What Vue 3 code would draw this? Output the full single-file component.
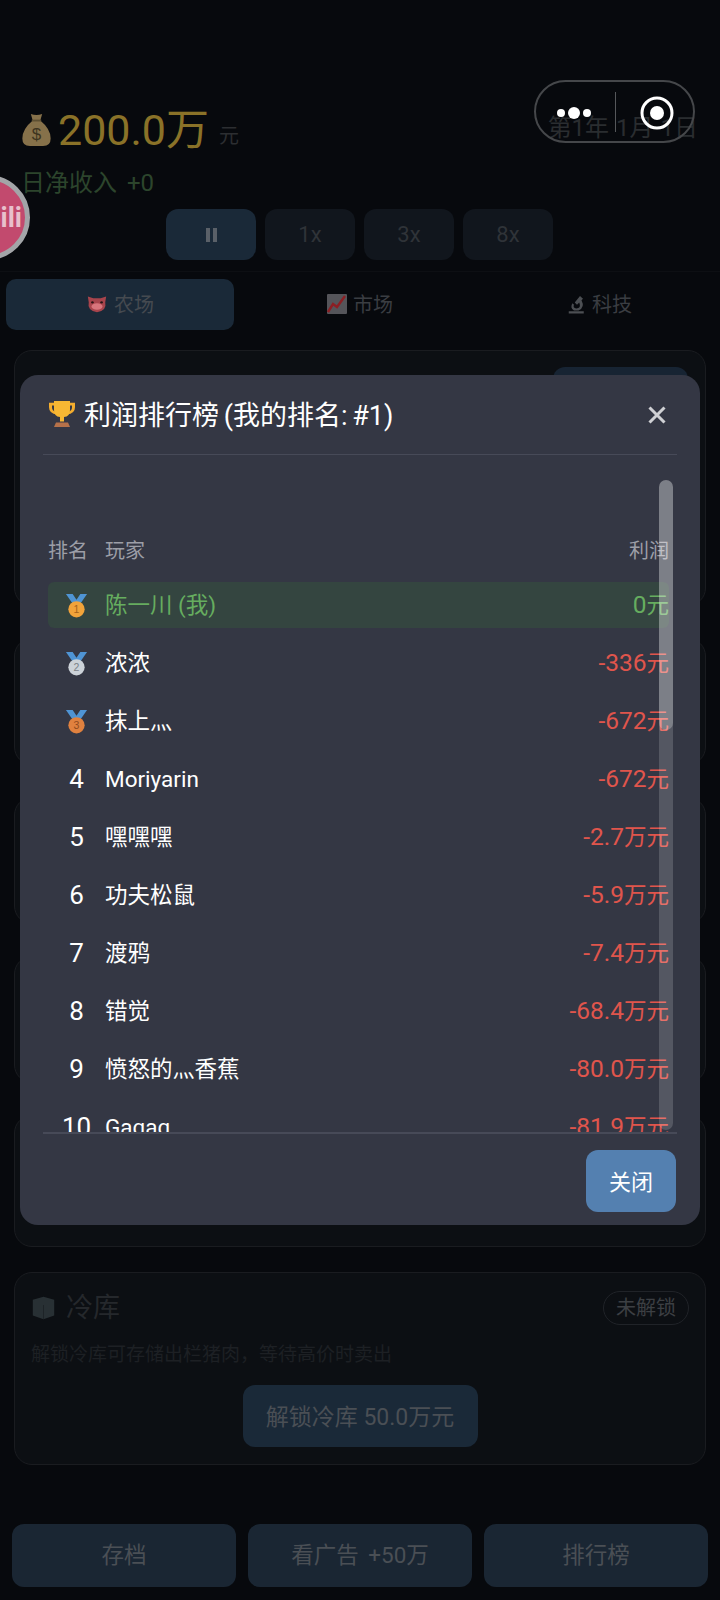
<template>
  <div class="page">
    <div class="capsule">
      <svg class="cap-more" width="40" height="20" viewBox="0 0 40 20">
        <circle cx="5" cy="10" r="4" fill="#fff" />
        <circle cx="18" cy="10" r="6" fill="#fff" />
        <circle cx="31" cy="10" r="4" fill="#fff" />
      </svg>
      <span class="cap-line"></span>
      <svg class="cap-ring" width="36" height="36" viewBox="0 0 36 36">
        <circle cx="18" cy="18" r="15" fill="none" stroke="#fff" stroke-width="3" />
        <circle cx="18" cy="18" r="7" fill="#fff" />
      </svg>
    </div>

    <div class="avatar"><span>bili</span></div>

    <header class="stats">
      <div class="stats-top">
        <div class="money">
          <svg width="31" height="34" viewBox="0 0 32 36">
            <path d="M10 1 Q16 3 22 1 L20 8 Q31 17 31 27 Q31 35 23 35 L9 35 Q1 35 1 27 Q1 17 12 8 Z" fill="#86714a" />
            <rect x="11" y="7" width="10" height="2" fill="#5e5032" />
            <text x="16" y="29" font-size="18" text-anchor="middle" fill="#3d3420" font-family="Liberation Sans">$</text>
          </svg>
          <span class="money-num">200.0万</span>
          <span class="money-unit">元</span>
        </div>
        <div class="date">第1年 1月 1日</div>
      </div>
      <div class="income"><span>日净收入</span><span>+0</span></div>
      <div class="speeds">
        <button class="speed on"><i></i><i></i></button>
        <button class="speed">1x</button>
        <button class="speed">3x</button>
        <button class="speed">8x</button>
      </div>
    </header>

    <nav class="tabs">
      <div class="tab on">
        <svg width="22" height="20" viewBox="0 0 24 24" preserveAspectRatio="none">
          <path d="M2 3 L8 5 H16 L22 3 L21 10 Q23 20 12 22 Q1 20 3 10 Z" fill="#a8444c" />
          <ellipse cx="12" cy="15" rx="6" ry="4" fill="#d8757c" />
          <circle cx="7" cy="10" r="1.4" fill="#2a1416" />
          <circle cx="17" cy="10" r="1.4" fill="#2a1416" />
        </svg>
        农场
      </div>
      <div class="tab">
        <svg width="20" height="20" viewBox="0 0 20 20">
          <rect width="20" height="20" rx="1" fill="#55555a" />
          <path d="M1 18 L6 10 L10 13 L18 2" fill="none" stroke="#8c1f24" stroke-width="2.4" />
        </svg>
        市场
      </div>
      <div class="tab">
        <svg width="18" height="22" viewBox="0 0 24 30" preserveAspectRatio="none">
          <path d="M1 28 H21 V25 H1 Z M8 24 Q2 20 6 14 L8 16 Q6 20 11 21 Q18 21 15 13 L12 16 L9 13 L16 4 L20 8 L18 10 Q23 20 14 24 Z" fill="#4c4f53" />
        </svg>
        科技
      </div>
    </nav>

    <main class="cards">
      <section class="card h1">
        <div class="card-btn"></div>
      </section>
      <section class="card h2"></section>
      <section class="card h2"></section>
      <section class="card h2"></section>
      <section class="card h3"></section>
      <section class="card cold">
        <div class="cold-head">
          <div class="cold-title">
            <svg width="25" height="24" viewBox="0 0 28 32" preserveAspectRatio="none">
              <path d="M2 5 L14 1 L26 5 V26 L14 31 L2 26 Z" fill="#283034" />
              <path d="M14 12 V31" stroke="#1b2124" stroke-width="1" />
            </svg>
            冷库
          </div>
          <span class="badge">未解锁</span>
        </div>
        <p class="cold-desc">解锁冷库可存储出栏猪肉，等待高价时卖出</p>
        <button class="cold-btn">解锁冷库 50.0万元</button>
      </section>
    </main>

    <footer class="actions">
      <button>存档</button>
      <button>看广告 +50万</button>
      <button>排行榜</button>
    </footer>

    <div class="modal">
      <div class="modal-head">
        <svg class="trophy" width="28" height="27" viewBox="0 0 28 30" preserveAspectRatio="none">
          <path d="M1 3 H27 V8 Q27 15 19 16 L9 16 Q1 15 1 8 Z M4 6 V8 Q4 12 8 13 L20 13 Q24 12 24 8 V6 Z" fill="#f4ad2e" />
          <path d="M6 1 H22 V11 Q22 18 16 19 V24 H12 V19 Q6 18 6 11 Z" fill="#f7b733" />
          <path d="M8 25 H20 L22 30 H6 Z" fill="#b5714a" />
        </svg>
        <span class="modal-title">利润排行榜 (我的排名: #1)</span>
        <svg class="close" width="20" height="20" viewBox="0 0 20 20">
          <path d="M2.5 2.5 L17.5 17.5 M17.5 2.5 L2.5 17.5" stroke="#cfd0d4" stroke-width="3" />
        </svg>
      </div>
      <div class="modal-body">
        <div class="thead">
          <span class="c-rank">排名</span>
          <span class="c-name">玩家</span>
          <span class="c-val">利润</span>
        </div>
        <div v-for="(r, i) in rows" :key="i" :class="['row', { me: i === 0 }]">
          <span class="c-rank rank">
            <svg v-if="i < 3" width="23" height="25" viewBox="0 0 24 26">
              <path d="M1 1 H8 L12 7 L16 1 H23 L14 14 H10 Z" fill="#4f94d4" />
              <circle cx="12" cy="17" r="8.5" :fill="medals[i]" />
              <text x="12" y="21" font-size="11" text-anchor="middle" :fill="medalText[i]" font-family="Liberation Sans">{{ i + 1 }}</text>
            </svg>
            <template v-else>{{ i + 1 }}</template>
          </span>
          <span class="c-name">{{ r.name }}<span v-if="r.tail" class="tail">灬</span>{{ r.rest }}</span>
          <span :class="['c-val', { neg: i > 0 }]"><span class="num">{{ r.num }}</span>{{ r.unit }}</span>
        </div>
        <div class="bar"><div class="bar-thumb"></div></div>
      </div>
      <div class="modal-foot">
        <button class="close-btn">关闭</button>
      </div>
    </div>
  </div>
</template>

<script setup>
const medals = ['#f2a33a', '#ccd2d8', '#e0813f']
const medalText = ['#a8641a', '#7b8288', '#8f4a1e']

const rows = [
  { name: '陈一川 (我)', num: '0', unit: '元' },
  { name: '浓浓', num: '-336', unit: '元' },
  { name: '抹上', tail: true, num: '-672', unit: '元' },
  { name: 'Moriyarin', num: '-672', unit: '元' },
  { name: '嘿嘿嘿', num: '-2.7', unit: '万元' },
  { name: '功夫松鼠', num: '-5.9', unit: '万元' },
  { name: '渡鸦', num: '-7.4', unit: '万元' },
  { name: '错觉', num: '-68.4', unit: '万元' },
  { name: '愤怒的', tail: true, rest: '香蕉', num: '-80.0', unit: '万元' },
  { name: 'Gagag', num: '-81.9', unit: '万元' }
]
</script>

<style>
html, body {
  margin: 0;
  background: #07090d;
}
</style>

<style scoped>
.page {
  position: relative;
  width: 720px;
  height: 1600px;
  overflow: hidden;
  background: #07090d;
  font-family: Roboto, "Noto Sans CJK SC", sans-serif;
}

button {
  border: 0;
  font-family: inherit;
  padding: 0;
}

.capsule {
  position: absolute;
  z-index: 3;
  top: 80px;
  left: 534px;
  width: 161px;
  height: 63px;
  box-sizing: border-box;
  border: 2px solid #45474a;
  border-radius: 32px;
  display: flex;
  align-items: center;
  padding-left: 20px;
}

.cap-more {
  margin-top: 2px;
}

.cap-line {
  width: 1px;
  height: 40px;
  margin-left: 19px;
  background: #55575a;
}

.cap-ring {
  margin-left: 23px;
  margin-top: 2px;
}

.avatar {
  position: absolute;
  top: 175px;
  left: -55px;
  width: 85px;
  height: 85px;
  box-sizing: border-box;
  border: 5px solid #a3a5a8;
  border-radius: 50%;
  background: #c24a6e;
  color: #e8c0cc;
  font-size: 27px;
  font-weight: 700;
  display: flex;
  align-items: center;
  justify-content: flex-end;
  padding-right: 3px;
  overflow: hidden;
}

.stats {
  padding: 102px 22px 0 21px;
}

.stats-top {
  display: flex;
  justify-content: space-between;
  align-items: center;
}

.money {
  display: flex;
  align-items: center;
}

.money svg {
  margin-right: 6px;
}

.money-num {
  font-size: 43px;
  line-height: 56px;
  color: #8a7228;
}

.money-unit {
  font-size: 20px;
  margin: 8px 0 0 10px;
  color: #2c2e31;
}

.date {
  position: relative;
  top: -2px;
  font-size: 24px;
  line-height: 34px;
  color: #2a2d30;
  word-spacing: 1px;
}

.income {
  display: flex;
  gap: 10px;
  font-size: 24px;
  line-height: 34px;
  margin-top: 8px;
  color: #2c452c;
}

.speeds {
  display: flex;
  justify-content: center;
  gap: 9px;
  margin-top: 9px;
}

.speed {
  width: 90px;
  height: 51px;
  border-radius: 12px;
  background: #11161d;
  color: #2f3338;
  font-size: 22px;
  display: flex;
  align-items: center;
  justify-content: center;
  gap: 3px;
}

.speed.on {
  background: #1a2938;
}

.speed i {
  width: 4px;
  height: 14px;
  background: #5a6068;
}

.tabs {
  display: flex;
  gap: 12px;
  margin-top: 11px;
  padding: 7px 6px 0;
  border-top: 1px solid #0d0f13;
}

.tab {
  flex: 1;
  height: 51px;
  box-sizing: border-box;
  padding-bottom: 2px;
  border-radius: 10px;
  color: #3a3d42;
  font-size: 20px;
  display: flex;
  align-items: center;
  justify-content: center;
  gap: 6px;
}

.tab.on {
  background: #1a2938;
  color: #454a50;
}

.cards {
  display: flex;
  flex-direction: column;
  gap: 32px;
  padding: 20px 14px 0;
}

.card {
  position: relative;
  box-sizing: border-box;
  border: 1px solid #1a1c20;
  border-radius: 18px;
  background: #0c0f13;
}

.h1 { height: 256px; }
.h2 { height: 127px; }
.h3 { height: 132px; }

.card-btn {
  position: absolute;
  top: 16px;
  right: 17px;
  width: 135px;
  height: 40px;
  border-radius: 12px;
  background: #172433;
}

.cold {
  height: 193px;
  margin-top: -7px;
  padding: 0 16px;
}

.cold-head {
  display: flex;
  align-items: center;
  justify-content: space-between;
  padding-top: 18px;
}

.cold-title {
  display: flex;
  align-items: center;
  gap: 10px;
  font-size: 27px;
  line-height: 34px;
  color: #25282c;
}

.badge {
  box-sizing: border-box;
  border: 1px solid #202328;
  border-radius: 17px;
  height: 34px;
  line-height: 32px;
  padding: 0 12px;
  font-size: 20px;
  color: #3c3f43;
}

.cold-desc {
  margin: 16px 0 0;
  font-size: 19px;
  line-height: 28px;
  color: #1d2024;
}

.cold-btn {
  display: block;
  margin: 16px auto 0;
  width: 235px;
  height: 62px;
  padding-bottom: 3px;
  border-radius: 12px;
  background: #1a2938;
  color: #4a4f55;
  font-size: 23px;
}

.actions {
  position: absolute;
  left: 12px;
  right: 12px;
  bottom: 13px;
  display: flex;
  gap: 12px;
}

.actions button {
  flex: 1;
  height: 63px;
  padding-bottom: 5px;
  border-radius: 12px;
  background: #1a2633;
  color: #4a4f55;
  font-size: 22.5px;
  word-spacing: 4px;
}

.modal {
  position: absolute;
  z-index: 2;
  top: 375px;
  left: 20px;
  width: 680px;
  height: 850px;
  border-radius: 18px;
  background: #343744;
  display: flex;
  flex-direction: column;
}

.modal-head {
  display: flex;
  align-items: center;
  height: 80px;
  margin: 0 23px;
  padding: 0 10px 3px 5px;
  box-sizing: border-box;
  border-bottom: 1px solid #474a58;
}

.trophy {
  margin-right: 8px;
}

.modal-title {
  flex: 1;
  font-size: 27px;
  word-spacing: -2px;
  color: #fff;
}

.close {
  margin-top: 3px;
}

.modal-body {
  position: relative;
  height: 679px;
  margin: 0 23px;
  padding: 78px 0 0 5px;
  box-sizing: border-box;
  overflow: hidden;
  border-bottom: 2px solid #474a58;
  color: #fff;
}

.thead {
  display: flex;
  align-items: center;
  height: 32px;
  margin-right: 8px;
  margin-bottom: 17px;
  font-size: 20px;
  color: #9c9ea7;
}

.row {
  display: flex;
  align-items: center;
  height: 46px;
  margin-bottom: 12px;
  margin-right: 8px;
  font-size: 22.5px;
  line-height: 30px;
  border-radius: 6px;
}

.row.me {
  background: #344540;
  color: #66ad5f;
}

.c-rank {
  width: 57px;
  flex-shrink: 0;
}

.rank {
  display: flex;
  justify-content: center;
  font-size: 26px;
}

.c-name {
  flex: 1;
}

.tail {
  font-size: 22px;
}

.c-val {
  text-align: right;
}

.num {
  font-size: 24.5px;
}

.neg {
  color: #e0554c;
}

.bar {
  position: absolute;
  top: 25px;
  right: 4px;
  width: 14px;
  height: 650px;
  border-radius: 7px;
  background: rgba(255, 255, 255, 0.16);
}

.bar-thumb {
  height: 250px;
  border-radius: 7px;
  background: rgba(255, 255, 255, 0.24);
}

.modal-foot {
  display: flex;
  justify-content: flex-end;
  padding: 16px 24px 0 0;
}

.close-btn {
  width: 90px;
  height: 62px;
  padding-bottom: 3px;
  border-radius: 12px;
  background: #5480b0;
  color: #fff;
  font-size: 22px;
}
</style>
